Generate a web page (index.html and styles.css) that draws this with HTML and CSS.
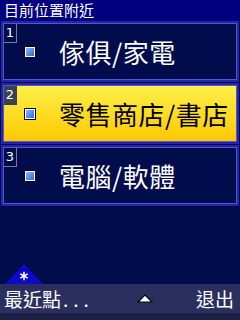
FILE: index.html
```html
<!DOCTYPE html>
<html>
<head>
<meta charset="utf-8">
<link rel="stylesheet" href="styles.css">
</head>
<body>
<div class="screen">
  <div class="title">目前位置附近</div>
  <div class="list">
    <div class="item">
      <div class="num">1</div>
      <div class="bullet"></div>
      <div class="label">傢俱/家電</div>
    </div>
    <div class="item selected">
      <div class="num">2</div>
      <div class="bullet"></div>
      <div class="label">零售商店/書店</div>
    </div>
    <div class="item">
      <div class="num">3</div>
      <div class="bullet"></div>
      <div class="label">電腦/軟體</div>
    </div>
  </div>
  <div class="spacer"></div>
  <div class="tab">
    <svg width="38" height="20" viewBox="0 0 38 20">
      <polygon points="19,0 38,20 0,20" fill="#0a0ac8"/>
      <g stroke="#ffffff" stroke-width="1.6" stroke-linecap="square">
        <line x1="19" y1="8.5" x2="19" y2="15.5"/>
        <line x1="16" y1="10.3" x2="22" y2="13.7"/>
        <line x1="16" y1="13.7" x2="22" y2="10.3"/>
      </g>
    </svg>
  </div>
  <div class="softkeys">
    <span class="sk left">最近點<span class="dots">...</span></span>
    <svg class="up" width="16" height="9" viewBox="0 0 16 9">
      <polygon points="8,1 15,8 1,8" fill="#ffffff" stroke="#000000" stroke-width="1.2"/>
    </svg>
    <span class="sk right">退出</span>
  </div>
  <div class="strip"></div>
</div>
</body>
</html>
```
FILE: styles.css
```css
html, body {
  margin: 0;
  padding: 0;
}
body {
  width: 240px;
  height: 320px;
  overflow: hidden;
  background: #000c4b;
  font-family: "Noto Sans CJK TC", "DejaVu Sans", sans-serif;
  color: #ffffff;
}
.screen {
  width: 240px;
  height: 320px;
  display: flex;
  flex-direction: column;
}
.title {
  height: 21px;
  background: #00007e;
  font-size: 15px;
  line-height: 20px;
  padding-left: 4px;
  box-sizing: border-box;
}
.list {
  display: flex;
  flex-direction: column;
  gap: 5px;
  padding: 2px 3px 0 3px;
}
.item {
  height: 55px;
  border: 1px solid #5454d8;
  box-shadow: 0 0 0 2px #2424a4;
  background: #000c4b;
  display: flex;
  align-items: center;
  position: relative;
}
.item.selected {
  background: linear-gradient(#fff04a, #ffc800);
  color: #000000;
}
.num {
  position: absolute;
  left: 0;
  top: 0;
  width: 12px;
  height: 18px;
  border-right: 1px solid #7a7a90;
  border-bottom: 1px solid #7a7a90;
  font-family: "DejaVu Sans", sans-serif;
  font-size: 13px;
  line-height: 18px;
  text-align: center;
  color: #ffffff;
}
.item.selected .num {
  background: #3a4150;
  border-color: #3a4150;
}
.bullet {
  width: 8px;
  height: 8px;
  margin-left: 21px;
  border: 1px solid #ffffff;
  background: linear-gradient(135deg, #8ab8ff, #2f68d8);
  box-shadow: 0 0 0 1px #000000;
}
.label {
  margin-left: 24px;
  font-size: 26px;
  line-height: 30px;
  letter-spacing: 0.5px;
}
.spacer {
  flex: 1;
}
.tab {
  height: 20px;
  padding-left: 5px;
}
.tab svg {
  display: block;
}
.softkeys {
  height: 29px;
  background: #2b2f5f;
  display: flex;
  align-items: center;
  justify-content: space-between;
  padding: 0 6px 0 4px;
}
.sk {
  font-size: 19px;
  line-height: 29px;
}
.dots {
  letter-spacing: 5px;
  margin-left: 2px;
}
.up {
  display: block;
  margin-left: 0;
}
.strip {
  height: 7px;
  background: #1c2045;
}
```
